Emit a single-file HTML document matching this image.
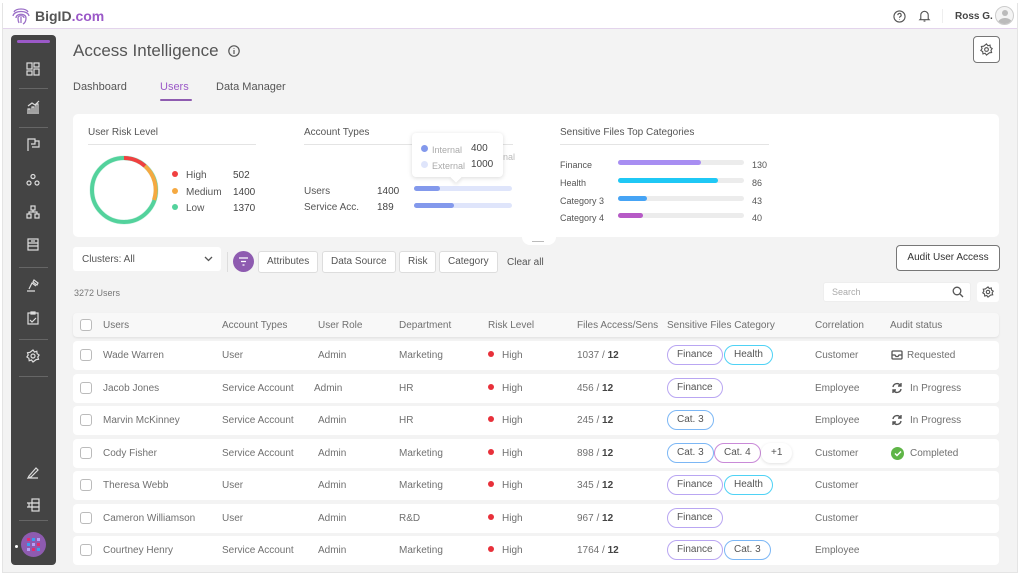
<!DOCTYPE html>
<html><head><meta charset="utf-8"><style>
*{box-sizing:border-box;margin:0;padding:0}
body{width:1024px;height:575px;overflow:hidden;background:#fff;font-family:"Liberation Sans",sans-serif;color:#666;position:relative}
.abs{position:absolute}
#frame{left:2px;top:3px;width:1016px;height:570px;background:#f3f3f3;border:1px solid #e4e4e4}
#top{left:3px;top:3px;width:1014px;height:26px;background:#fff;border-bottom:1px solid #e3d4ec}
#side{left:11px;top:35px;width:45px;height:530px;background:#444;border-radius:4px}
.sic{position:absolute;left:15px;width:14px;height:14px}
.sep{position:absolute;left:8px;width:29px;height:1px;background:#666}
.card{background:#fff;border-radius:5px}
.t10{font-size:10px}
.row{position:absolute;left:73px;width:926px;height:29px;background:#fff;border-radius:4px;font-size:10px;color:#707070}
.row span,.hdr span{position:absolute;top:9px;white-space:nowrap}
.cb{position:absolute;left:7px;top:8px;width:12px;height:12px;border:1px solid #bbb;border-radius:3px;background:#fff}
.pill{position:absolute;top:4px;height:20px;border-radius:10px;border:1px solid;font-size:10px;line-height:18px;padding:0 9px;color:#555;background:#fff}
.pf{border-color:#b9a6f2}.ph{border-color:#4fd2f5}.pc{border-color:#7cb7f5}.p4{border-color:#c98ad8}
.dot{display:inline-block;width:6px;height:6px;border-radius:50%;background:#e8303a;margin-right:8px;vertical-align:1px}
.chip{position:absolute;top:251px;height:22px;background:#fff;border:1px solid #ddd;border-radius:3px;font-size:10px;line-height:20px;padding:0 8px;color:#555}
.bar{position:absolute;height:5px;border-radius:3px}
</style></head><body>
<div id="frame" class="abs"></div>
<div id="top" class="abs">
 <svg class="abs" style="left:8px;top:3px" width="20" height="20" viewBox="0 0 20 20" fill="none" stroke="#9b6fc7" stroke-width="1.3"><path d="M3 6c2-4 12-4 14 0M2 10c1-6 15-6 16 0M5 12c0-5 10-5 10 0 0 3-1 5-3 6M8 17c-1-2-1-4-1-5 0-3 6-3 6 0M10 11v6"/></svg>
 <div class="abs" style="left:32px;top:5px;font-size:14px;font-weight:bold;color:#555">BigID<span style="color:#9b59c8">.com</span></div>
 <svg class="abs" style="left:890px;top:7px" width="13" height="13" viewBox="0 0 14 14" fill="none" stroke="#555" stroke-width="1.2"><circle cx="7" cy="7" r="6"/><path d="M5.2 5.5a1.8 1.8 0 1 1 2.5 1.6c-.5.3-.7.6-.7 1.2M7 10v.5"/></svg>
 <svg class="abs" style="left:915px;top:6px" width="13" height="14" viewBox="0 0 14 14" fill="none" stroke="#555" stroke-width="1.2"><path d="M3 10V6a4 4 0 0 1 8 0v4l1 1H2zM6 12.5h2"/></svg>
 <div class="abs" style="left:939px;top:6px;width:1px;height:14px;background:#eee"></div>
 <div class="abs" style="left:952px;top:8px;font-size:10px;font-weight:bold;color:#444">Ross G.</div>
 <div class="abs" style="left:992px;top:3px;width:19px;height:19px;border-radius:50%;border:1px solid #ccc;background:#f4f4f4;overflow:hidden"><div class="abs" style="left:6px;top:3px;width:6px;height:6px;border-radius:50%;background:#bbb"></div><div class="abs" style="left:2px;top:11px;width:14px;height:10px;border-radius:50%;background:#bbb"></div></div>
</div>
<div id="side" class="abs">
 <div class="abs" style="left:6px;top:5px;width:33px;height:3px;background:#9b59c8;border-radius:2px"></div>
 <svg class="sic" style="top:27px" viewBox="0 0 14 14" fill="none" stroke="#ddd" stroke-width="1.2"><rect x="1" y="1" width="5" height="6"/><rect x="8" y="1" width="5" height="4"/><rect x="1" y="9" width="5" height="4"/><rect x="8" y="7" width="5" height="6"/></svg>
 <div class="sep" style="top:53px"></div>
 <svg class="sic" style="top:65px" viewBox="0 0 14 14" fill="none" stroke="#ddd" stroke-width="1.2"><path d="M1 13h12M2 12V9h2v3M6 12V7h2v5M10 12V4h2v8M2 6l4-3 3 2 4-4"/></svg>
 <div class="sep" style="top:92px"></div>
 <svg class="sic" style="top:103px" viewBox="0 0 14 14" fill="none" stroke="#ddd" stroke-width="1.2"><path d="M2 13V1h7v5H5M9 3h4v6H6"/></svg>
 <svg class="sic" style="top:138px" viewBox="0 0 14 14" fill="none" stroke="#ddd" stroke-width="1.2"><circle cx="7" cy="3.5" r="2"/><circle cx="3" cy="10" r="2"/><circle cx="11" cy="10" r="2"/></svg>
 <svg class="sic" style="top:170px" viewBox="0 0 14 14" fill="none" stroke="#ddd" stroke-width="1.2"><rect x="5" y="1" width="4" height="4"/><rect x="1" y="9" width="4" height="4"/><rect x="9" y="9" width="4" height="4"/><path d="M7 5v2M3 9V7h8v2"/></svg>
 <svg class="sic" style="top:202px" viewBox="0 0 14 14" fill="none" stroke="#ddd" stroke-width="1.2"><rect x="2" y="2" width="10" height="11"/><path d="M2 6h10M2 9h10M5 4h4"/></svg>
 <div class="sep" style="top:232px"></div>
 <svg class="sic" style="top:243px" viewBox="0 0 14 14" fill="none" stroke="#ddd" stroke-width="1.2"><path d="M1 13h8M3 11l3-6 4 3M8 2l4 3-1 2-4-3z"/></svg>
 <svg class="sic" style="top:276px" viewBox="0 0 14 14" fill="none" stroke="#ddd" stroke-width="1.2"><rect x="2" y="2" width="10" height="11"/><path d="M5 1h4v2H5zM4 9l2 2 4-4"/></svg>
 <div class="sep" style="top:304px"></div>
 <svg class="sic" style="top:314px" viewBox="0 0 14 14" fill="none" stroke="#ddd" stroke-width="1.2"><circle cx="7" cy="7" r="2"/><path d="M7 1l1.5 2 2.3-.7.3 2.4 2 1.3-1.3 2 .7 2.3-2.4.3L7 13l-1.5-2-2.3.7-.3-2.4-2-1.3 1.3-2-.7-2.3 2.4-.3z"/></svg>
 <div class="sep" style="top:341px"></div>
 <svg class="sic" style="top:430px" viewBox="0 0 14 14" fill="none" stroke="#ddd" stroke-width="1.2"><path d="M2 13h10M3 11l7-8 2 2-7 7-3 1z"/></svg>
 <svg class="sic" style="top:463px" viewBox="0 0 14 14" fill="none" stroke="#ddd" stroke-width="1.2"><rect x="6" y="1" width="7" height="4"/><rect x="6" y="5" width="7" height="4"/><rect x="6" y="9" width="7" height="4"/><path d="M1 5h5M1 9h5M3 5v4"/></svg>
 <div class="sep" style="top:485px"></div>
 <div class="abs" style="left:4px;top:510px;width:3px;height:3px;border-radius:50%;background:#fff"></div>
 <div class="abs" style="left:10px;top:497px;width:25px;height:25px;border-radius:50%;background:#8e5bb0"></div>
 <svg class="abs" style="left:15px;top:502px" width="15" height="15" viewBox="0 0 15 15"><g fill="#e62a6d"><rect x="1" y="1" width="3" height="3"/><rect x="11" y="6" width="3" height="3"/><rect x="6" y="11" width="3" height="3"/></g><g fill="#3aa0f0"><rect x="6" y="1" width="3" height="3"/><rect x="1" y="6" width="3" height="3"/><rect x="11" y="11" width="3" height="3"/></g><g fill="#b59ef5"><rect x="11" y="1" width="3" height="3"/><rect x="6" y="6" width="3" height="3"/><rect x="1" y="11" width="3" height="3"/></g></svg>
</div>

<div class="abs" style="left:73px;top:41px;font-size:17px;color:#555">Access Intelligence</div>
<svg class="abs" style="left:228px;top:45px" width="12" height="12" viewBox="0 0 12 12" fill="none" stroke="#555" stroke-width="1.2"><circle cx="6" cy="6" r="5.2"/><path d="M6 5v4M6 3v.6"/></svg>
<div class="abs" style="left:973px;top:36px;width:27px;height:27px;border:1px solid #777;border-radius:4px;background:#fff"></div>
<svg class="abs" style="left:980px;top:43px" width="13" height="13" viewBox="0 0 14 14" fill="none" stroke="#555" stroke-width="1.2"><circle cx="7" cy="7" r="2"/><path d="M7 1l1.5 2 2.3-.7.3 2.4 2 1.3-1.3 2 .7 2.3-2.4.3L7 13l-1.5-2-2.3.7-.3-2.4-2-1.3 1.3-2-.7-2.3 2.4-.3z"/></svg>
<div class="abs" style="left:73px;top:81px;font-size:11px;color:#555">Dashboard</div>
<div class="abs" style="left:160px;top:81px;font-size:11px;color:#9b59c8">Users</div>
<div class="abs" style="left:160px;top:99px;width:32px;height:2px;background:#8e5bb0;border-radius:1px"></div>
<div class="abs" style="left:216px;top:81px;font-size:11px;color:#555">Data Manager</div>

<div class="abs card" style="left:73px;top:114px;width:926px;height:123px"></div>
<div class="abs" style="left:522px;top:233px;width:34px;height:12px;background:#fff;border-radius:0 0 8px 8px"></div>
<div class="abs" style="left:532px;top:241px;width:12px;height:1px;background:#bbb"></div>
<div class="abs t10" style="left:88px;top:127px;color:#555">User Risk Level</div>
<div class="abs" style="left:88px;top:144px;width:168px;height:1px;background:#e4e4e4"></div>
<svg class="abs" style="left:88px;top:154px" width="72" height="72" viewBox="0 0 72 72" fill="none">
 <circle cx="36" cy="36" r="32" stroke="#d7f3e8" stroke-width="5"/>
 <circle cx="36" cy="36" r="32" stroke="#53d29c" stroke-width="4"/>
 <path d="M36 4A32 32 0 0 1 57 12" stroke="#f04040" stroke-width="4"/>
 <path d="M57 12A32 32 0 0 1 66 46" stroke="#f5a941" stroke-width="4"/>
</svg>
<div class="abs t10" style="left:172px;top:168px;line-height:16.5px;color:#555">
 <div><span class="dot" style="background:#f04040"></span>High</div>
 <div><span class="dot" style="background:#f5a941"></span>Medium</div>
 <div><span class="dot" style="background:#53d29c"></span>Low</div>
</div>
<div class="abs t10" style="left:233px;top:168px;line-height:16.5px;color:#444">502<br>1400<br>1370</div>

<div class="abs t10" style="left:304px;top:127px;color:#555">Account Types</div>
<div class="abs" style="left:304px;top:144px;width:209px;height:1px;background:#e4e4e4"></div>
<div class="abs" style="left:503px;top:152px;font-size:9px;color:#bbb">nal</div>
<div class="abs t10" style="left:304px;top:184px;line-height:16px;color:#555">Users<br>Service Acc.</div>
<div class="abs t10" style="left:377px;top:184px;line-height:16px;color:#444">1400<br>189</div>
<div class="bar" style="left:414px;top:186px;width:98px;background:#dfe5fb"></div>
<div class="bar" style="left:414px;top:186px;width:26px;background:#8399ec"></div>
<div class="bar" style="left:414px;top:203px;width:98px;background:#dfe5fb"></div>
<div class="bar" style="left:414px;top:203px;width:40px;background:#8399ec"></div>
<div class="abs" style="left:412px;top:133px;width:91px;height:44px;background:#fff;border-radius:4px;box-shadow:0 1px 5px rgba(0,0,0,.15)"></div>
<div class="abs" style="left:452px;top:173px;width:8px;height:8px;background:#fff;transform:rotate(45deg);box-shadow:2px 2px 3px rgba(0,0,0,.08)"></div>
<div class="abs" style="left:421px;top:142px;font-size:9px;line-height:16px;color:#aaa"><div><span class="dot" style="background:#8399ec;width:7px;height:7px;margin-right:4px"></span>Internal</div><div><span class="dot" style="background:#dfe5fb;width:7px;height:7px;margin-right:4px"></span>External</div></div>
<div class="abs t10" style="left:471px;top:141px;line-height:16px;color:#444">400<br>1000</div>

<div class="abs t10" style="left:560px;top:127px;color:#555">Sensitive Files Top Categories</div>
<div class="abs" style="left:560px;top:144px;width:209px;height:1px;background:#e4e4e4"></div>
<div class="abs" style="left:560px;top:157px;font-size:9px;line-height:17.8px;color:#555">Finance<br>Health<br>Category 3<br>Category 4</div>
<div class="bar" style="left:618px;top:160px;width:126px;background:#ececec"></div><div class="bar" style="left:618px;top:160px;width:83px;background:#a88ef2"></div>
<div class="bar" style="left:618px;top:178px;width:126px;background:#ececec"></div><div class="bar" style="left:618px;top:178px;width:100px;background:#1fc8f5"></div>
<div class="bar" style="left:618px;top:196px;width:126px;background:#ececec"></div><div class="bar" style="left:618px;top:196px;width:29px;background:#46a4f5"></div>
<div class="bar" style="left:618px;top:213px;width:126px;background:#ececec"></div><div class="bar" style="left:618px;top:213px;width:25px;background:#b65ac6"></div>
<div class="abs" style="left:752px;top:157px;font-size:9px;line-height:17.8px;color:#555">130<br>86<br>43<br>40</div>

<div class="abs" style="left:73px;top:247px;width:148px;height:24px;background:#fff;border-radius:3px"></div>
<div class="abs t10" style="left:82px;top:254px;color:#555">Clusters: All</div>
<svg class="abs" style="left:204px;top:256px" width="9" height="6" viewBox="0 0 9 6" fill="none" stroke="#555" stroke-width="1.3"><path d="M1 1l3.5 3.5L8 1"/></svg>
<div class="abs" style="left:227px;top:252px;width:1px;height:20px;background:#ddd"></div>
<div class="abs" style="left:233px;top:251px;width:21px;height:21px;border-radius:50%;background:#8e5bb0"></div>
<svg class="abs" style="left:238px;top:256px" width="11" height="11" viewBox="0 0 11 11" stroke="#fff" stroke-width="1.3"><path d="M1 2h9M3 5.5h5M4.5 9h2"/></svg>
<div class="chip" style="left:258px">Attributes</div>
<div class="chip" style="left:322px">Data Source</div>
<div class="chip" style="left:399px">Risk</div>
<div class="chip" style="left:439px">Category</div>
<div class="abs t10" style="left:507px;top:257px;color:#555">Clear all</div>
<div class="abs" style="left:896px;top:245px;width:104px;height:26px;background:#fff;border:1px solid #777;border-radius:4px;font-size:10px;line-height:24px;text-align:center;color:#333">Audit User Access</div>

<div class="abs" style="left:74px;top:288px;font-size:9px;color:#777">3272 Users</div>
<div class="abs" style="left:823px;top:282px;width:148px;height:20px;background:#fff;border-radius:3px;border:1px solid #eee"></div>
<div class="abs" style="left:832px;top:287px;font-size:9px;color:#aaa">Search</div>
<svg class="abs" style="left:952px;top:286px" width="12" height="12" viewBox="0 0 12 12" fill="none" stroke="#555" stroke-width="1.3"><circle cx="5" cy="5" r="3.8"/><path d="M8 8l3 3"/></svg>
<div class="abs" style="left:977px;top:282px;width:22px;height:20px;background:#fff;border-radius:3px"></div>
<svg class="abs" style="left:982px;top:286px" width="12" height="12" viewBox="0 0 14 14" fill="none" stroke="#555" stroke-width="1.3"><circle cx="7" cy="7" r="2"/><path d="M7 1l1.5 2 2.3-.7.3 2.4 2 1.3-1.3 2 .7 2.3-2.4.3L7 13l-1.5-2-2.3.7-.3-2.4-2-1.3 1.3-2-.7-2.3 2.4-.3z"/></svg>

<div class="row hdr" style="top:313px;height:24px;background:#f8f8f8;box-shadow:0 1px 2px rgba(0,0,0,.08)">
 <div class="cb" style="top:6px"></div>
 <span style="left:30px;top:7px">Users</span><span style="left:149px;top:7px">Account Types</span><span style="left:245px;top:7px">User Role</span><span style="left:326px;top:7px">Department</span><span style="left:415px;top:7px">Risk Level</span><span style="left:504px;top:7px">Files Access/Sens</span><span style="left:594px;top:7px">Sensitive Files Category</span><span style="left:742px;top:7px">Correlation</span><span style="left:817px;top:7px">Audit status</span>
</div>

<div class="row" style="top:341px"><div class="cb"></div><span style="left:30px">Wade Warren</span><span style="left:149px">User</span><span style="left:245px">Admin</span><span style="left:326px">Marketing</span><span style="left:415px"><i class="dot"></i>High</span><span style="left:504px">1037 / <b style="color:#444">12</b></span><div class="pill pf" style="left:594px">Finance</div><div class="pill ph" style="left:651px">Health</div><span style="left:742px">Customer</span>
<svg class="abs" style="left:818px;top:8px" width="12" height="12" viewBox="0 0 12 12" fill="none" stroke="#555" stroke-width="1.3"><rect x="1" y="2" width="10" height="8" rx="1"/><path d="M1 6h3l1 1.5h2L8 6h3"/></svg><span style="left:834px">Requested</span></div>
<div class="row" style="top:373.5px"><div class="cb"></div><span style="left:30px">Jacob Jones</span><span style="left:149px">Service Account</span><span style="left:241px">Admin</span><span style="left:326px">HR</span><span style="left:415px"><i class="dot"></i>High</span><span style="left:504px">456 / <b style="color:#444">12</b></span><div class="pill pf" style="left:594px">Finance</div><span style="left:742px">Employee</span>
<svg class="abs" style="left:818px;top:8px" width="12" height="12" viewBox="0 0 12 12" fill="none" stroke="#555" stroke-width="1.4"><path d="M2 5a4 4 0 0 1 7-2l1 1M10 7a4 4 0 0 1-7 2L2 8M10 1v3H7M2 11V8h3"/></svg><span style="left:837px">In Progress</span></div>
<div class="row" style="top:406px"><div class="cb"></div><span style="left:30px">Marvin McKinney</span><span style="left:149px">Service Account</span><span style="left:245px">Admin</span><span style="left:326px">HR</span><span style="left:415px"><i class="dot"></i>High</span><span style="left:504px">245 / <b style="color:#444">12</b></span><div class="pill pc" style="left:594px">Cat. 3</div><span style="left:742px">Employee</span>
<svg class="abs" style="left:818px;top:8px" width="12" height="12" viewBox="0 0 12 12" fill="none" stroke="#555" stroke-width="1.4"><path d="M2 5a4 4 0 0 1 7-2l1 1M10 7a4 4 0 0 1-7 2L2 8M10 1v3H7M2 11V8h3"/></svg><span style="left:837px">In Progress</span></div>
<div class="row" style="top:438.5px"><div class="cb"></div><span style="left:30px">Cody Fisher</span><span style="left:149px">Service Account</span><span style="left:245px">Admin</span><span style="left:326px">Marketing</span><span style="left:415px"><i class="dot"></i>High</span><span style="left:504px">898 / <b style="color:#444">12</b></span><div class="pill pc" style="left:594px">Cat. 3</div><div class="pill p4" style="left:641px">Cat. 4</div><div class="pill" style="left:688px;border-color:#fff;box-shadow:0 1px 3px rgba(0,0,0,.12)">+1</div><span style="left:742px">Customer</span>
<div class="abs" style="left:818px;top:8px;width:13px;height:13px;border-radius:50%;background:#5fb547"></div><svg class="abs" style="left:821px;top:11px" width="8" height="7" viewBox="0 0 8 7" fill="none" stroke="#fff" stroke-width="1.5"><path d="M1 3.5l2 2 4-4"/></svg><span style="left:837px">Completed</span></div>
<div class="row" style="top:471px"><div class="cb"></div><span style="left:30px">Theresa Webb</span><span style="left:149px">User</span><span style="left:245px">Admin</span><span style="left:326px">Marketing</span><span style="left:415px"><i class="dot"></i>High</span><span style="left:504px">345 / <b style="color:#444">12</b></span><div class="pill pf" style="left:594px">Finance</div><div class="pill ph" style="left:651px">Health</div><span style="left:742px">Customer</span></div>
<div class="row" style="top:503.5px"><div class="cb"></div><span style="left:30px">Cameron Williamson</span><span style="left:149px">User</span><span style="left:245px">Admin</span><span style="left:326px">R&amp;D</span><span style="left:415px"><i class="dot"></i>High</span><span style="left:504px">967 / <b style="color:#444">12</b></span><div class="pill pf" style="left:594px">Finance</div><span style="left:742px">Customer</span></div>
<div class="row" style="top:536px"><div class="cb"></div><span style="left:30px">Courtney Henry</span><span style="left:149px">Service Account</span><span style="left:245px">Admin</span><span style="left:326px">Marketing</span><span style="left:415px"><i class="dot"></i>High</span><span style="left:504px">1764 / <b style="color:#444">12</b></span><div class="pill pf" style="left:594px">Finance</div><div class="pill pc" style="left:651px">Cat. 3</div><span style="left:742px">Employee</span></div>
</body></html>
